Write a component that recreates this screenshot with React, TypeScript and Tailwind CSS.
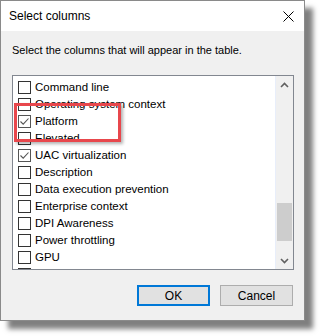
import React from 'react';

const columns = [
  { label: 'Command line', checked: false },
  { label: 'Operating system context', checked: false },
  { label: 'Platform', checked: true },
  { label: 'Elevated', checked: false },
  { label: 'UAC virtualization', checked: true },
  { label: 'Description', checked: false },
  { label: 'Data execution prevention', checked: false },
  { label: 'Enterprise context', checked: false },
  { label: 'DPI Awareness', checked: false },
  { label: 'Power throttling', checked: false },
  { label: 'GPU', checked: false },
  { label: '', checked: false }, // partially scrolled row
];

const CheckBox = ({ checked }: { checked: boolean }) => (
  <div className={`w-[13px] h-[13px] shrink-0 bg-white border ${checked ? 'border-[#555]' : 'border-[#333]'} flex items-center justify-center`}>
    {checked && (
      <svg width="11" height="11" viewBox="0 0 11 11">
        <path d="M1.5 5.5 L4.2 8.2 L9.5 2.5" fill="none" stroke="#555" strokeWidth="1.1" />
      </svg>
    )}
  </div>
);

export default function App() {
  return (
    <div className="relative w-[320px] h-[336px] bg-white overflow-hidden" style={{ fontFamily: '"Liberation Sans", Arial, sans-serif' }}>
      <div className="relative w-[305px] h-[321px] border border-[#8a8a8a] bg-[#f0f0f0] flex flex-col shadow-[8px_8px_5px_rgba(0,0,0,0.5)]">
        {/* title bar */}
        <div className="h-[30px] bg-white flex items-center justify-between pl-[8px] pr-[10px]">
          <span className="text-[12px] text-black">Select columns</span>
          <svg width="11" height="11" viewBox="0 0 11 11">
            <path d="M0.5 0.5 L10.5 10.5 M10.5 0.5 L0.5 10.5" stroke="#000" strokeWidth="1" />
          </svg>
        </div>

        <div className="flex-1 flex flex-col px-[11px]">
          <p className="mt-[12px] text-[11px] leading-[14px] text-black">Select the columns that will appear in the table.</p>

          {/* list box */}
          <div className="mt-[18px] h-[195px] w-[282px] border border-[#828790] bg-white flex overflow-hidden">
            <div className="flex-1 pt-[3px] pl-[5px] overflow-hidden">
              {columns.map((c, i) => (
                <div key={i} className="h-[17px] flex items-center gap-[4px] whitespace-nowrap">
                  <CheckBox checked={c.checked} />
                  {c.label && <span className="text-[11.5px] text-black">{c.label}</span>}
                </div>
              ))}
            </div>
            <div className="w-[18px] bg-[#f0f0f0] border-l border-[#e8eefa] flex flex-col items-center">
              <div className="h-[17px] flex items-center justify-center">
                <svg width="9" height="6" viewBox="0 0 9 6">
                  <path d="M1 5 L4.5 1.5 L8 5" fill="none" stroke="#606060" strokeWidth="1.6" />
                </svg>
              </div>
              <div className="flex-1 w-full flex flex-col px-[1px]">
                <div className="h-[110px]" />
                <div className="h-[38px] bg-[#cdcdcd]" />
              </div>
              <div className="h-[17px] flex items-center justify-center">
                <svg width="9" height="6" viewBox="0 0 9 6">
                  <path d="M1 1 L4.5 4.5 L8 1" fill="none" stroke="#606060" strokeWidth="1.6" />
                </svg>
              </div>
            </div>
          </div>

          {/* buttons */}
          <div className="mt-[15px] flex justify-end gap-[10px]">
            <button className="w-[73px] h-[21px] bg-[#e1e1e1] border-2 border-[#0078d7] text-[12px] text-black">OK</button>
            <button className="w-[73px] h-[21px] bg-[#e1e1e1] border border-[#adadad] text-[12px] text-black">Cancel</button>
          </div>
        </div>

        {/* annotation highlight */}
        <div className="absolute left-[13px] top-[102px] w-[107px] h-[39px] border-[3px] border-[#e8474c] shadow-[2px_2px_3px_rgba(0,0,0,0.3)]" />
      </div>
    </div>
  );
}
